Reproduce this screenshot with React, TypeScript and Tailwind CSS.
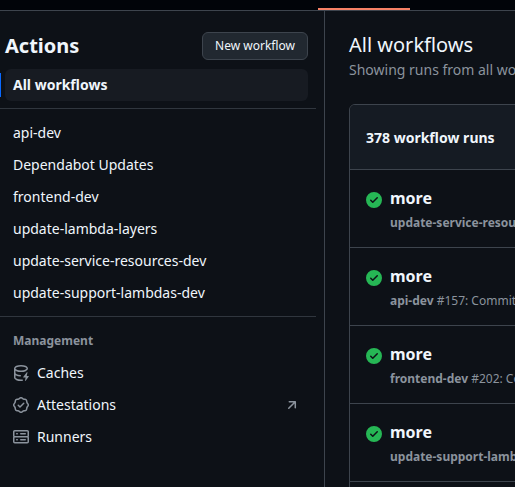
import React from "react";

type IconProps = { className?: string };

function CheckCircleIcon({ className }: IconProps) {
  return (
    <svg viewBox="0 0 16 16" width="16" height="16" fill="currentColor" className={className}>
      <path d="M8 16A8 8 0 1 1 8 0a8 8 0 0 1 0 16Zm3.78-9.72a.751.751 0 0 0-.018-1.042.751.751 0 0 0-1.042-.018L6.75 9.19 5.28 7.72a.751.751 0 0 0-1.042.018.751.751 0 0 0-.018 1.042l2 2a.75.75 0 0 0 1.06 0Z" />
    </svg>
  );
}

function CacheIcon({ className }: IconProps) {
  return (
    <svg viewBox="0 0 16 16" width="16" height="16" fill="currentColor" className={className}>
      <path d="M2.5 5.724V8c0 .248.238.7 1.169 1.159.874.43 2.144.745 3.62.822a.75.75 0 1 1-.078 1.498c-1.622-.085-3.102-.432-4.204-.975a5.565 5.565 0 0 1-.507-.28V12.5c0 .133.058.318.282.551.227.237.591.483 1.101.707 1.015.447 2.47.742 4.117.742.406 0 .802-.018 1.183-.052a.751.751 0 1 1 .134 1.494C8.89 15.98 8.45 16 8 16c-1.805 0-3.475-.32-4.721-.869-.623-.274-1.173-.619-1.579-1.041-.408-.425-.7-.964-.7-1.59v-9c0-.626.292-1.165.7-1.591.406-.42.956-.766 1.579-1.04C4.525.32 6.195 0 8 0c1.806 0 3.476.32 4.721.869.623.274 1.173.619 1.579 1.041.408.425.7.964.7 1.59 0 .626-.292 1.165-.7 1.591-.406.42-.956.766-1.578 1.04C11.475 6.68 9.805 7 8 7c-1.805 0-3.475-.32-4.721-.869a6.15 6.15 0 0 1-.779-.407Zm0-2.224c0 .133.058.318.282.551.227.237.591.483 1.101.707C4.898 5.205 6.353 5.5 8 5.5c1.646 0 3.101-.295 4.118-.742.508-.224.873-.471 1.1-.708.224-.232.282-.417.282-.55 0-.133-.058-.318-.282-.551-.227-.237-.591-.483-1.101-.707C11.102 1.795 9.647 1.5 8 1.5c-1.646 0-3.101.295-4.118.742-.508.224-.873.471-1.1.708-.224.232-.282.417-.282.55Z" />
      <path d="M14.49 7.582a.375.375 0 0 0-.66-.313l-3.625 4.625a.375.375 0 0 0 .295.606h2.127l-.619 2.922a.375.375 0 0 0 .666.304l3.125-4.125A.375.375 0 0 0 15.5 11h-1.778l.769-3.418Z" />
    </svg>
  );
}

function VerifiedIcon({ className }: IconProps) {
  return (
    <svg viewBox="0 0 16 16" width="16" height="16" fill="currentColor" className={className}>
      <path d="m9.585.52.929.68c.153.112.331.186.518.215l1.138.175a2.678 2.678 0 0 1 2.24 2.24l.174 1.139c.029.187.103.365.215.518l.68.928a2.677 2.677 0 0 1 0 3.17l-.68.928a1.174 1.174 0 0 0-.215.518l-.175 1.138a2.678 2.678 0 0 1-2.241 2.241l-1.138.175a1.17 1.17 0 0 0-.518.215l-.928.68a2.677 2.677 0 0 1-3.17 0l-.928-.68a1.174 1.174 0 0 0-.518-.215L3.83 14.41a2.678 2.678 0 0 1-2.24-2.24l-.175-1.138a1.17 1.17 0 0 0-.215-.518l-.68-.928a2.677 2.677 0 0 1 0-3.17l.68-.928c.112-.153.186-.331.215-.518l.175-1.14a2.678 2.678 0 0 1 2.24-2.24l1.139-.175c.187-.029.365-.103.518-.215l.928-.68a2.677 2.677 0 0 1 3.17 0ZM7.303 1.728l-.927.68a2.67 2.67 0 0 1-1.18.489l-1.137.174a1.179 1.179 0 0 0-.987.987l-.174 1.136a2.677 2.677 0 0 1-.489 1.18l-.68.928a1.18 1.18 0 0 0 0 1.394l.68.927c.256.348.424.753.489 1.18l.174 1.137c.078.509.478.909.987.987l1.136.174a2.67 2.67 0 0 1 1.18.489l.928.68c.414.305.979.305 1.394 0l.927-.68a2.67 2.67 0 0 1 1.18-.489l1.137-.174a1.18 1.18 0 0 0 .987-.987l.174-1.136a2.67 2.67 0 0 1 .489-1.18l.68-.928a1.176 1.176 0 0 0 0-1.394l-.68-.927a2.686 2.686 0 0 1-.489-1.18l-.174-1.137a1.179 1.179 0 0 0-.987-.987l-1.136-.174a2.677 2.677 0 0 1-1.18-.489l-.928-.68a1.176 1.176 0 0 0-1.394 0ZM11.28 6.78l-3.75 3.75a.75.75 0 0 1-1.06 0L4.72 8.78a.751.751 0 0 1 .018-1.042.751.751 0 0 1 1.042-.018L7 8.94l3.22-3.22a.751.751 0 0 1 1.042.018.751.751 0 0 1 .018 1.042Z" />
    </svg>
  );
}

function ServerIcon({ className }: IconProps) {
  return (
    <svg viewBox="0 0 16 16" width="16" height="16" fill="currentColor" className={className}>
      <path d="M1.75 1h12.5c.966 0 1.75.784 1.75 1.75v4c0 .372-.116.717-.314 1 .198.283.314.628.314 1v4a1.75 1.75 0 0 1-1.75 1.75H1.75A1.75 1.75 0 0 1 0 12.75v-4c0-.358.109-.707.314-1a1.739 1.739 0 0 1-.314-1v-4C0 1.784.784 1 1.75 1ZM1.5 2.75v4c0 .138.112.25.25.25h12.5a.25.25 0 0 0 .25-.25v-4a.25.25 0 0 0-.25-.25H1.75a.25.25 0 0 0-.25.25Zm.25 5.75a.25.25 0 0 0-.25.25v4c0 .138.112.25.25.25h12.5a.25.25 0 0 0 .25-.25v-4a.25.25 0 0 0-.25-.25ZM7 4.75A.75.75 0 0 1 7.75 4h4.5a.75.75 0 0 1 0 1.5h-4.5A.75.75 0 0 1 7 4.75ZM7.75 10h4.5a.75.75 0 0 1 0 1.5h-4.5a.75.75 0 0 1 0-1.5ZM3 4.75A.75.75 0 0 1 3.75 4h.5a.75.75 0 0 1 0 1.5h-.5A.75.75 0 0 1 3 4.75ZM3.75 10h.5a.75.75 0 0 1 0 1.5h-.5a.75.75 0 0 1 0-1.5Z" />
    </svg>
  );
}

function ArrowUpRightIcon({ className }: IconProps) {
  return (
    <svg viewBox="0 0 16 16" width="16" height="16" fill="currentColor" className={className}>
      <path d="M4.53 4.75A.75.75 0 0 1 5.28 4h6.01a.75.75 0 0 1 .75.75v6.01a.75.75 0 0 1-1.5 0v-4.2l-5.26 5.261a.749.749 0 0 1-1.275-.326.749.749 0 0 1 .215-.734L9.48 5.5h-4.2a.75.75 0 0 1-.75-.75Z" />
    </svg>
  );
}

const workflows = [
  "api-dev",
  "Dependabot Updates",
  "frontend-dev",
  "update-lambda-layers",
  "update-service-resources-dev",
  "update-support-lambdas-dev",
];

const management = [
  { label: "Caches", Icon: CacheIcon, external: false },
  { label: "Attestations", Icon: VerifiedIcon, external: true },
  { label: "Runners", Icon: ServerIcon, external: false },
];

const runs = [
  { workflow: "update-service-resources-dev", detail: "" },
  { workflow: "api-dev", detail: "#157: Commit" },
  { workflow: "frontend-dev", detail: "#202: Commit" },
  { workflow: "update-support-lambdas-dev", detail: "" },
];

function Sidebar() {
  return (
    <aside className="w-[325px] shrink-0 border-r border-[#3d444d]">
      <div className="flex items-center justify-between pt-[21px] pr-4 pl-[5px]">
        <h2 className="text-xl leading-7 font-bold">Actions</h2>
        <button className="h-7 w-[106px] rounded-md border border-[#3d444d] bg-[#212830] text-xs">
          New workflow
        </button>
      </div>
      <nav className="pt-[9px]">
        <div className="flex items-center">
          <span className="h-6 w-[5px] shrink-0">
            <span className="block h-6 w-px bg-[#0969ff]" />
          </span>
          <a className="mr-4 flex h-8 grow items-center rounded-md bg-[#171b22] px-2 font-bold">
            All workflows
          </a>
        </div>
        <hr className="mt-[7px] mr-2 mb-2 border-[#30363e]" />
        <ul>
          {workflows.map((name) => (
            <li key={name} className="flex h-8 items-center pl-[13px]">
              {name}
            </li>
          ))}
        </ul>
        <hr className="mt-[7px] mr-2 border-[#30363e]" />
        <h3 className="pt-[15px] pb-[7px] pl-[13px] text-xs leading-[18px] font-bold text-[#8b939d]">
          Management
        </h3>
        <ul>
          {management.map(({ label, Icon, external }) => (
            <li key={label} className="flex h-8 items-center gap-2 pr-6 pl-[13px]">
              <Icon className="text-[#8b939d]" />
              <span className="grow">{label}</span>
              {external && <ArrowUpRightIcon className="text-[#8b939d]" />}
            </li>
          ))}
        </ul>
      </nav>
    </aside>
  );
}

function RunList() {
  return (
    <main className="w-[600px] shrink-0 pt-[19px] pl-6">
      <h1 className="text-xl leading-[30px]">All workflows</h1>
      <p className="text-sm leading-5 text-[#8b939d]">Showing runs from all workflows</p>
      <section className="mt-6 rounded-t-md border border-[#3d444d]">
        <header className="flex h-16 items-center rounded-t-[5px] bg-[#151b23] pt-[2px] pl-4 font-bold">
          378 workflow runs
        </header>
        {runs.map(({ workflow, detail }) => (
          <article key={workflow} className="flex h-[78px] gap-2 border-t border-[#3d444d] pt-4 pl-4">
            <CheckCircleIcon className="mt-[6px] shrink-0 text-[#26b755]" />
            <div>
              <h4 className="text-base leading-6 font-bold">more</h4>
              <p className="mt-1 text-xs leading-[18px] text-[#8b939d]">
                <b>{workflow}</b> {detail}
              </p>
            </div>
          </article>
        ))}
        <div className="h-5 border-t border-[#3d444d]" />
      </section>
    </main>
  );
}

export default function App() {
  return (
    <div className="flex h-[487px] w-[515px] flex-col overflow-hidden bg-[#0d1117] font-['Noto_Sans',sans-serif] text-sm leading-5 text-[#f0f6fc]">
      <div className="flex h-[11px] shrink-0 items-end border-b border-[#3d444d] bg-[#010409]">
        <div className="ml-[318px] h-[2px] w-[92px] bg-[#f78166]" />
      </div>
      <div className="flex min-h-0 grow">
        <Sidebar />
        <RunList />
      </div>
    </div>
  );
}
